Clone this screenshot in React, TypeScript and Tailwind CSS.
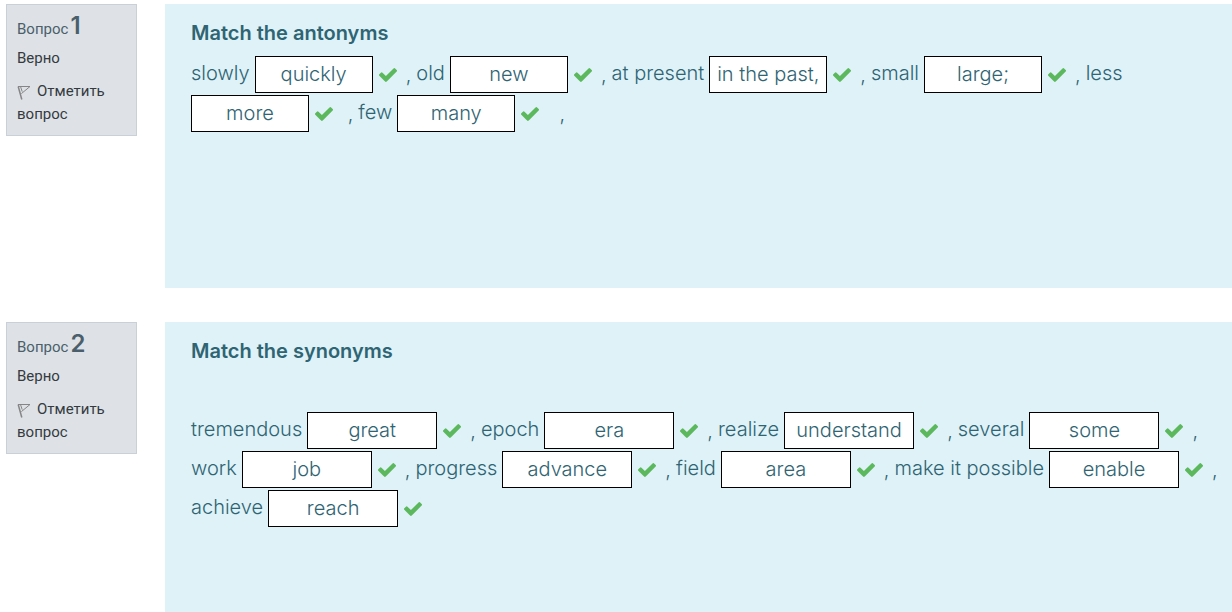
import React from "react";

type Item = { word: string; answer: string; tail?: string };

type Question = {
  number: number;
  title: string;
  titleClass: string;
  panelClass: string;
  boxClass: string;
  items: Item[];
};

const questions: Question[] = [
  {
    number: 1,
    title: "Match the antonyms",
    titleClass: "mb-[7px]",
    panelClass: "min-h-[284px]",
    boxClass: "w-[118px]",
    items: [
      { word: "slowly", answer: "quickly", tail: "," },
      { word: "old", answer: "new", tail: "," },
      { word: "at present", answer: "in the past,", tail: "," },
      { word: "small", answer: "large;", tail: "," },
      { word: "less", answer: "more", tail: "\u00a0," },
      { word: "few", answer: "many", tail: "\u00a0\u00a0," },
    ],
  },
  {
    number: 2,
    title: "Match the synonyms",
    titleClass: "mb-[45px]",
    panelClass: "min-h-[290px]",
    boxClass: "w-[130px]",
    items: [
      { word: "tremendous", answer: "great", tail: "," },
      { word: "epoch", answer: "era", tail: "," },
      { word: "realize", answer: "understand", tail: "," },
      { word: "several", answer: "some", tail: "," },
      { word: "work", answer: "job", tail: "," },
      { word: "progress", answer: "advance", tail: "," },
      { word: "field", answer: "area", tail: "," },
      { word: "make it possible", answer: "enable", tail: "," },
      { word: "achieve", answer: "reach" },
    ],
  },
];

function Check() {
  return (
    <svg
      viewBox="121 334 1550 1188"
      className="ml-1.5 h-3.5 w-[18px] shrink-0 fill-[#5cb85c]"
      role="img"
      aria-label="Верно"
    >
      <path d="M1671 566q0 40-28 68l-724 724-136 136q-28 28-68 28t-68-28l-136-136-362-362q-28-28-28-68t28-68l136-136q28-28 68-28t68 28l294 295 656-657q28-28 68-28t68 28l136 136q28 28 28 68z" />
    </svg>
  );
}

function Flag() {
  return (
    <svg
      viewBox="0 0 14 15"
      className="mr-1.5 inline-block h-[15px] w-3.5 align-[-4px]"
      fill="none"
      stroke="#858585"
      aria-hidden="true"
    >
      <path d="M1.2 1.5 4.8 14.5" strokeWidth="1.5" />
      <path d="M1 1.5H13L4.4 8.6M3.6 1.8 5.2 6.6" strokeWidth="1" />
    </svg>
  );
}

function Info({ number }: { number: number }) {
  return (
    <aside className="h-[132px] w-[131px] shrink-0 border border-[#cad0d7] bg-[#dee2e6] px-2.5 pt-[5px] font-['Roboto',sans-serif] text-[15px] text-[#343a40]">
      <h3 className="flex h-8 items-baseline gap-0.5 leading-8 text-[#4a5f6b]">
        Вопрос
        <span className="font-['Inter',sans-serif] text-2xl leading-8 font-semibold">{number}</span>
      </h3>
      <div className="mt-1 leading-6">Верно</div>
      <button type="button" className="mt-2.5 block text-left leading-[23px]">
        <Flag />
        Отметить вопрос
      </button>
    </aside>
  );
}

function QuestionRow({ question }: { question: Question }) {
  return (
    <section className="flex gap-7">
      <Info number={question.number} />
      <div className={`min-w-0 flex-1 bg-[#def2f8] pt-3.5 pr-1 pl-[26px] ${question.panelClass}`}>
        <h2 className={`text-xl leading-[30px] font-semibold ${question.titleClass}`}>
          {question.title}
        </h2>
        <p className="text-xl leading-9 font-light">
          {question.items.map((item) => (
            <React.Fragment key={item.word}>
              <span className="mr-[5px]">{item.word}</span>
              <span className="mr-[5px] inline-flex h-[39px] items-center align-middle whitespace-nowrap">
                <span
                  className={`flex h-[37px] items-center justify-center border border-black bg-white pb-0.5 ${question.boxClass}`}
                >
                  {item.answer}
                </span>
                <Check />
                {item.tail && <span className="ml-[9px]">{item.tail}</span>}
              </span>
            </React.Fragment>
          ))}
        </p>
      </div>
    </section>
  );
}

export default function App() {
  return (
    <main className="flex flex-col gap-[34px] bg-white pt-1 pl-1.5 font-['Inter',sans-serif] text-[#2f6473]">
      {questions.map((question) => (
        <QuestionRow key={question.number} question={question} />
      ))}
    </main>
  );
}
